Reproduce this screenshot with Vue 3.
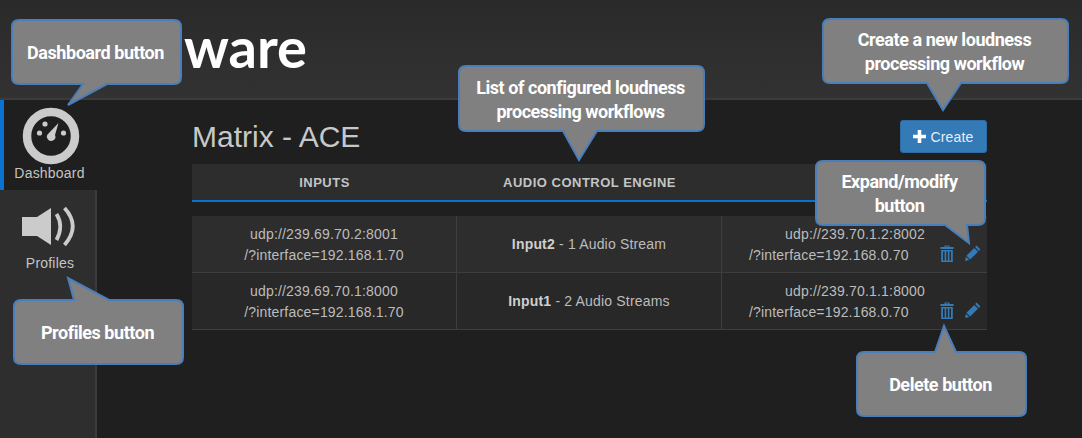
<template>
  <div class="page">
    <header class="top">
      <span class="logo">ware</span>
    </header>

    <div class="body">
      <nav class="side">
        <a class="side-item active">
          <svg class="side-icon" width="58" height="58" viewBox="0 0 58 58">
            <circle cx="29" cy="29" r="24" fill="none" stroke="#cbcbcb" stroke-width="8.5" />
            <circle cx="17.5" cy="26" r="2.6" fill="#cbcbcb" />
            <circle cx="23" cy="17" r="2.6" fill="#cbcbcb" />
            <circle cx="41.5" cy="26" r="2.6" fill="#cbcbcb" />
            <path d="M36.5 16 L33 28 A4.2 4.2 0 1 1 26 27 Z" fill="#cbcbcb" />
          </svg>
          <span>Dashboard</span>
        </a>
        <a class="side-item">
          <svg class="side-icon" width="58" height="42" viewBox="0 0 58 42">
            <path d="M5 12 H20 L34 3 V40 L20 31 H5 Z" fill="#cbcbcb" />
            <path d="M39.5 9 Q47 21 39.5 35" fill="none" stroke="#cbcbcb" stroke-width="3.8" />
            <path d="M47.5 3 Q64 21 47.5 40" fill="none" stroke="#cbcbcb" stroke-width="3.8" />
          </svg>
          <span>Profiles</span>
        </a>
      </nav>

      <main class="main">
        <div class="title-row">
          <h1>Matrix - ACE</h1>
          <button class="create">
            <svg width="13" height="13" viewBox="0 0 13 13"><path d="M4.7 0 H8.3 V4.7 H13 V8.3 H8.3 V13 H4.7 V8.3 H0 V4.7 H4.7 Z" fill="#fff" /></svg>
            Create
          </button>
        </div>

        <div class="table-head">
          <div>INPUTS</div>
          <div>AUDIO CONTROL ENGINE</div>
          <div></div>
        </div>

        <div class="row" v-for="row in rows" :key="row.name">
          <div class="cell">
            <span>{{ row.input }}</span>
            <span>/?interface={{ row.inputIface }}</span>
          </div>
          <div class="cell">
            <span><b>{{ row.name }}</b> - {{ row.streams }}</span>
          </div>
          <div class="cell out">
            <div class="out-text">
              <span class="out-first">{{ row.output }}</span>
              <span>/?interface={{ row.outputIface }}</span>
            </div>
            <div class="actions">
              <svg width="14" height="17" viewBox="0 0 14 17">
                <path fill-rule="evenodd" fill="#337ab7" d="M4.5 2 V0.6 H9.5 V2 H13.6 V4 H0.4 V2 Z M5.6 1.5 V2 H8.4 V1.5 Z M1.2 5 H12.8 V17 H1.2 Z M3 6.5 V15.5 H4.6 V6.5 Z M6.2 6.5 V15.5 H7.8 V6.5 Z M9.4 6.5 V15.5 H11 V6.5 Z" />
              </svg>
              <svg width="16" height="16" viewBox="0 0 16 16">
                <path fill="#337ab7" d="M11.6 0.6 L15.4 4.4 L13.9 5.9 L10.1 2.1 Z M9.2 3 L13 6.8 L5.2 14.6 L1.4 10.8 Z M0.9 11.8 L4.2 15.1 L0 16 Z" />
              </svg>
            </div>
          </div>
        </div>
      </main>
    </div>

    <div
      v-for="c in callouts"
      :key="c.text"
      class="callout"
      :style="{ left: c.x + 'px', top: c.y + 'px', width: c.w + 'px', height: c.h + 'px' }"
    >
      <svg class="bubble" :width="c.w" :height="c.h">
        <path :d="bubblePath(c)" fill="#808080" stroke="#4a7ebb" stroke-width="2" />
      </svg>
      <p>{{ c.text }}</p>
    </div>
  </div>
</template>

<script setup>
const rows = [
  {
    input: 'udp://239.69.70.2:8001',
    inputIface: '192.168.1.70',
    name: 'Input2',
    streams: '1 Audio Stream',
    output: 'udp://239.70.1.2:8002',
    outputIface: '192.168.0.70',
  },
  {
    input: 'udp://239.69.70.1:8000',
    inputIface: '192.168.1.70',
    name: 'Input1',
    streams: '2 Audio Streams',
    output: 'udp://239.70.1.1:8000',
    outputIface: '192.168.0.70',
  },
]

// tail: a, b = where it leaves the box, tx, ty = the tip (box coordinates)
const callouts = [
  { text: 'Dashboard button', x: 12, y: 20, w: 169, h: 64, side: 'bottom', a: 71, b: 95, tx: 56, ty: 85 },
  { text: 'Profiles button', x: 14, y: 300, w: 169, h: 64, side: 'top', a: 60, b: 95, tx: 54, ty: -22 },
  { text: 'Create a new loudness processing workflow', x: 823, y: 19, w: 245, h: 64, side: 'bottom', a: 104, b: 138, tx: 120, ty: 91 },
  { text: 'List of configured loudness processing workflows', x: 459, y: 66, w: 245, h: 65, side: 'bottom', a: 104, b: 138, tx: 120, ty: 94 },
  { text: 'Expand/modify button', x: 816, y: 161, w: 169, h: 64, side: 'bottom', a: 129, b: 151, tx: 153, ty: 82 },
  { text: 'Delete button', x: 857, y: 352, w: 169, h: 64, side: 'top', a: 78, b: 99, tx: 87, ty: -26 },
]

const bubblePath = (c) => {
  const r = 7
  const { w, h } = c
  const top = c.side === 'top' ? `L${c.a} 0 L${c.tx} ${c.ty} L${c.b} 0` : ''
  const bottom = c.side === 'bottom' ? `L${c.b} ${h} L${c.tx} ${c.ty} L${c.a} ${h}` : ''
  return `M${r} 0 ${top} L${w - r} 0 Q${w} 0 ${w} ${r} L${w} ${h - r} Q${w} ${h} ${w - r} ${h} ${bottom} L${r} ${h} Q0 ${h} 0 ${h - r} L0 ${r} Q0 0 ${r} 0 Z`
}
</script>

<style>
html, body {
  margin: 0;
  background: #1f1f1f;
  overflow: hidden;
}
</style>

<style scoped>
.page {
  position: relative;
  width: 1082px;
  height: 438px;
  display: flex;
  flex-direction: column;
  font-family: "Liberation Sans", Arial, sans-serif;
  color: #bcbcbc;
  overflow: hidden;
}

.top {
  height: 100px;
  flex: none;
  box-sizing: border-box;
  padding-left: 184px;
  display: flex;
  align-items: center;
  background: linear-gradient(#2a2a2a, #323232);
  border-bottom: 2px solid #3b3b3b;
}
.logo {
  font-family: Lato, sans-serif;
  font-weight: 700;
  font-size: 56px;
  line-height: 1;
  color: #fff;
  margin-top: -5px;
}

.body {
  flex: 1;
  display: flex;
  min-height: 0;
}

.side {
  width: 97px;
  flex: none;
  box-sizing: border-box;
  background: #2e2e2e;
  border-right: 2px solid #3b3b3b;
}
.side-item {
  display: flex;
  flex-direction: column;
  align-items: center;
  font-size: 14px;
  letter-spacing: 0.2px;
  color: #c4c4c4;
  box-sizing: border-box;
}
.side-item.active {
  height: 90px;
  background: #1f1f1f;
  border-left: 4px solid #0a72d0;
  margin-right: -2px;
  padding-top: 7px;
  padding-right: 2px;
}
.side-item.active .side-icon { margin-left: 2px; }
.side-item:not(.active) {
  padding-top: 15px;
}
.side-item:not(.active) .side-icon { margin-left: -4px; }
.side-item:not(.active) span { margin-top: 8px; margin-left: 5px; }

.main {
  flex: 1;
  padding: 0 95px;
  background: #1f1f1f;
}

.title-row {
  height: 64px;
  display: flex;
  justify-content: space-between;
  align-items: flex-start;
}
h1 {
  margin: 21px 0 0;
  font-size: 30px;
  line-height: 32px;
  font-weight: 400;
  color: #c8c8c8;
}
.create {
  margin-top: 20px;
  width: 87px;
  height: 33px;
  padding: 0;
  display: flex;
  align-items: center;
  justify-content: center;
  gap: 4px;
  background: #337ab7;
  border: 1px solid #2e6da4;
  border-radius: 3px;
  color: #e6eef6;
  font: 14px "Liberation Sans", Arial, sans-serif;
  letter-spacing: 0.2px;
}

.table-head,
.row {
  display: grid;
  grid-template-columns: 265px 265px 265px;
}
.table-head {
  height: 38px;
  box-sizing: border-box;
  background: #2d2d2d;
  border-bottom: 2px solid #0a72d0;
  margin-bottom: 14px;
  align-items: center;
  text-align: center;
  font-size: 13px;
  font-weight: 700;
  letter-spacing: 0.5px;
  color: #c4c4c4;
}

.row {
  height: 57px;
  box-sizing: border-box;
  background: #2d2d2d;
  border-bottom: 1px solid #3e3e3e;
  font-size: 14px;
  letter-spacing: 0.18px;
}
.row + .row { background: #282828; }

.cell {
  display: flex;
  flex-direction: column;
  align-items: center;
  justify-content: center;
  padding-top: 1px;
  line-height: 21px;
  border-right: 1px solid #3e3e3e;
}
.cell b { color: #cfcfcf; }
.cell.out {
  flex-direction: row;
  justify-content: flex-start;
  align-items: flex-start;
  border-right: none;
  padding: 8px 0 0 27px;
}
.out-text {
  display: flex;
  flex-direction: column;
  width: 191px;
  flex: none;
}
.out-first { padding-left: 36px; }
.actions {
  display: flex;
  gap: 11px;
  margin-top: 21px;
}

.callout {
  position: absolute;
  display: flex;
  align-items: center;
  justify-content: center;
  box-sizing: border-box;
  padding: 2px 14px 0 12px;
}
.bubble {
  position: absolute;
  left: 0;
  top: 0;
  overflow: visible;
}
.callout p {
  position: relative;
  margin: 0;
  font-family: Roboto, sans-serif;
  font-weight: 700;
  font-size: 18px;
  letter-spacing: -0.45px;
  line-height: 24px;
  color: #fff;
  text-align: center;
}
</style>
